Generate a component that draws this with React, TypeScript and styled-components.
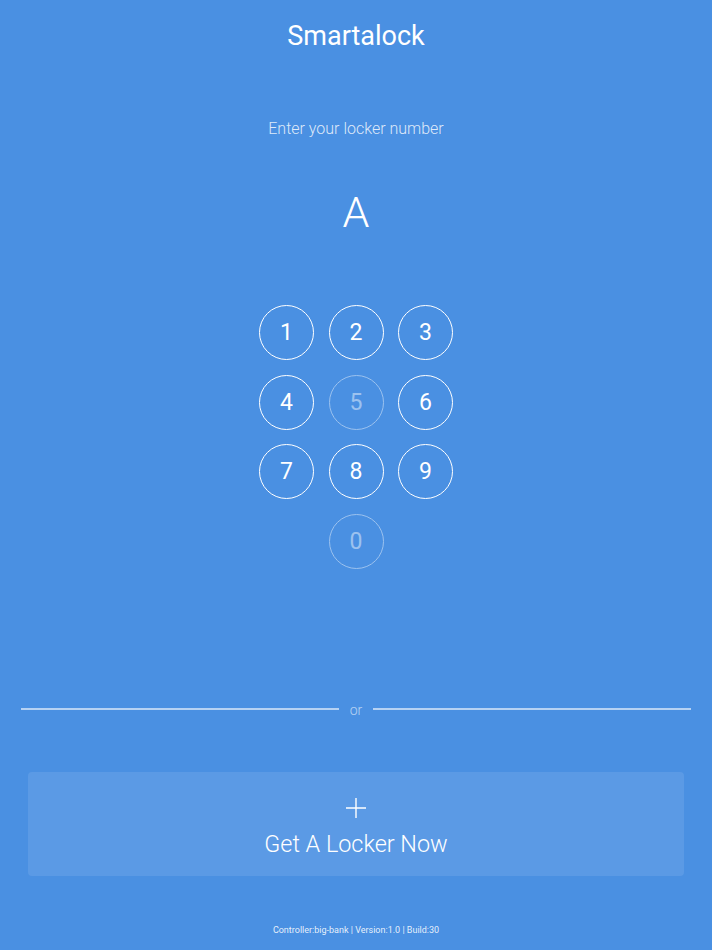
import React from "react";
import styled, { createGlobalStyle } from "styled-components";

const Global = createGlobalStyle`
  html, body { margin: 0; padding: 0; background: #4a90e2; }
  body { font-family: Roboto, "Helvetica Neue", Arial, sans-serif; }
  * { box-sizing: border-box; }
`;

const Page = styled.div`
  width: 712px;
  height: 950px;
  background: #4a90e2;
  color: #fff;
  display: flex;
  flex-direction: column;
  align-items: center;
  overflow: hidden;
  & > * { flex-shrink: 0; }
`;

const Title = styled.h1`
  margin: 19px 0 0;
  font-size: 27px;
  line-height: 34px;
  font-weight: 400;
`;

const Prompt = styled.div`
  margin-top: 66px;
  font-size: 16px;
  line-height: 20px;
  font-weight: 300;
  color: rgba(255, 255, 255, 0.82);
`;

const Entry = styled.div`
  margin-top: 48px;
  height: 50px;
  font-size: 43px;
  line-height: 50px;
  font-weight: 300;
`;

const Pad = styled.div`
  margin-top: 68px;
  display: grid;
  grid-template-columns: repeat(3, 55px);
  grid-auto-rows: 55px;
  gap: 14.5px;
`;

const Key = styled.button<{ $dim?: boolean; $col?: number }>`
  width: 55px;
  height: 55px;
  border-radius: 50%;
  border: 1.5px solid #fff;
  background: transparent;
  color: #fff;
  font-family: Roboto, "Helvetica Neue", Arial, sans-serif;
  font-size: 23px;
  font-weight: 400;
  padding: 0;
  display: flex;
  align-items: center;
  justify-content: center;
  opacity: ${(p) => (p.$dim ? 0.45 : 1)};
  grid-column: ${(p) => (p.$col ? p.$col : "auto")};
  cursor: pointer;
`;

const Divider = styled.div`
  margin-top: 132px;
  width: 670px;
  display: flex;
  align-items: center;
  gap: 11px;
`;

const Line = styled.div`
  flex: 1;
  height: 1.5px;
  background: rgba(255, 255, 255, 0.6);
`;

const Or = styled.span`
  font-size: 14px;
  font-weight: 300;
  line-height: 16px;
  color: rgba(255, 255, 255, 0.6);
  margin-top: 1px;
`;

const BigButton = styled.button`
  margin-top: 54px;
  width: 656px;
  height: 104px;
  border: none;
  border-radius: 4px;
  background: #5b9ae5;
  color: #fff;
  display: flex;
  flex-direction: column;
  align-items: center;
  padding: 25px 0 0;
  font-family: Roboto, "Helvetica Neue", Arial, sans-serif;
  cursor: pointer;
`;

const ButtonLabel = styled.span`
  margin-top: 12px;
  font-size: 23.4px;
  line-height: 26px;
  font-weight: 300;
`;

const Footer = styled.div`
  margin-top: 48px;
  font-size: 9px;
  line-height: 12px;
  color: rgba(255, 255, 255, 0.88);
`;

const Plus = () => (
  <svg width="22" height="22" viewBox="0 0 22 22">
    <path d="M11 1V21M1 11H21" stroke="#fff" strokeWidth="1.4" fill="none" />
  </svg>
);

export default function App() {
  const keys: { d: string; dim?: boolean; col?: number }[] = [
    { d: "1" },
    { d: "2" },
    { d: "3" },
    { d: "4" },
    { d: "5", dim: true },
    { d: "6" },
    { d: "7" },
    { d: "8" },
    { d: "9" },
    { d: "0", dim: true, col: 2 },
  ];
  return (
    <>
      <Global />
      <Page>
        <Title>Smartalock</Title>
        <Prompt>Enter your locker number</Prompt>
        <Entry>A</Entry>
        <Pad>
          {keys.map((k) => (
            <Key key={k.d} $dim={k.dim} $col={k.col}>
              {k.d}
            </Key>
          ))}
        </Pad>
        <Divider>
          <Line />
          <Or>or</Or>
          <Line />
        </Divider>
        <BigButton>
          <Plus />
          <ButtonLabel>Get A Locker Now</ButtonLabel>
        </BigButton>
        <Footer>Controller:big-bank | Version:1.0 | Build:30</Footer>
      </Page>
    </>
  );
}
